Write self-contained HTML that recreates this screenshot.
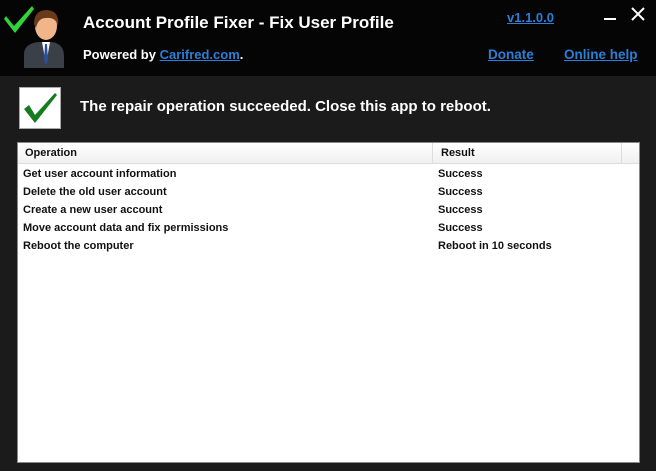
<!DOCTYPE html><html><head><style>
body{margin:0;width:656px;height:471px;background:#1b1b1b;font-family:"Liberation Sans",sans-serif;font-weight:bold;overflow:hidden;position:relative}
.hdr{position:absolute;left:0;top:0;width:656px;height:76px;background:#050505}
a{color:#2a7fd8;text-decoration:underline}
.t{position:absolute;color:#fff}
.tbl{position:absolute;left:17px;top:142px;width:621px;height:319px;background:#fff;border:1px solid #888;font-size:11px;color:#111}
.th{height:20px;background:linear-gradient(#fff,#f0f0f0);border-bottom:1px solid #ddd;position:relative}
.row{position:absolute;left:5px}
.r2{position:absolute;left:420px}
</style></head><body>
<div class="hdr"></div>
<svg style="position:absolute;left:0;top:0" width="75" height="72" viewBox="0 0 75 72">
<path d="M24 54 Q24 44 38 42 L52 42 Q64 44 64 56 L64 68 L24 68Z" fill="#3a3f48"/>
<path d="M42 42 L46 64 L50 42Z" fill="#fff"/><path d="M45 44 L47 44 L48 60 L46 64 L44 60Z" fill="#2a50a0"/>
<ellipse cx="46" cy="26" rx="11" ry="14" fill="#f1b58a"/>
<path d="M34 24 Q34 10 47 10 Q60 11 58 26 Q56 17 46 18 Q38 18 36 28Z" fill="#6a3a1c"/>
<path d="M6 16 L14 26 L32 6 L34 9 L15 33 L4 19Z" fill="#2fd33a"/>
</svg>
<div class="t" style="left:83px;top:13px;font-size:17px">Account Profile Fixer - Fix User Profile</div>
<div class="t" style="left:83px;top:47px;font-size:13px">Powered by <a>Carifred.com</a>.</div>
<div class="t" style="left:507px;top:10px;font-size:13px"><a>v1.1.0.0</a></div>
<div class="t" style="left:488px;top:47px;font-size:13.5px"><a>Donate</a></div>
<div class="t" style="left:564px;top:47px;font-size:13.5px"><a>Online help</a></div>
<div style="position:absolute;left:604px;top:18px;width:12px;height:2px;background:#fff"></div>
<svg style="position:absolute;left:630px;top:6px" width="16" height="16"><path d="M2 2L14 14M14 2L2 14" stroke="#fff" stroke-width="2"/></svg>
<div style="position:absolute;left:19px;top:87px;width:40px;height:40px;background:#fff;border:1px solid #aaa"></div>
<svg style="position:absolute;left:19px;top:87px" width="42" height="42"><path d="M5 22 L16 36 L38 8 L36 6 L16 28 L10 18Z" fill="#167a1e"/></svg>
<div class="t" style="left:80px;top:98px;font-size:15px">The repair operation succeeded. Close this app to reboot.</div>
<div class="tbl">
<div class="th"><span class="row" style="top:4px;left:7px">Operation</span><span style="position:absolute;left:414px;top:0;height:20px;border-left:1px solid #ddd"></span><span class="r2" style="top:4px;left:423px">Result</span><span style="position:absolute;left:603px;top:0;height:20px;border-left:1px solid #ddd"></span></div>
<div class="row" style="top:25px">Get user account information</div><div class="r2" style="top:25px">Success</div>
<div class="row" style="top:43px">Delete the old user account</div><div class="r2" style="top:43px">Success</div>
<div class="row" style="top:61px">Create a new user account</div><div class="r2" style="top:61px">Success</div>
<div class="row" style="top:79px">Move account data and fix permissions</div><div class="r2" style="top:79px">Success</div>
<div class="row" style="top:97px">Reboot the computer</div><div class="r2" style="top:97px">Reboot in 10 seconds</div>
</div>
</body></html>
